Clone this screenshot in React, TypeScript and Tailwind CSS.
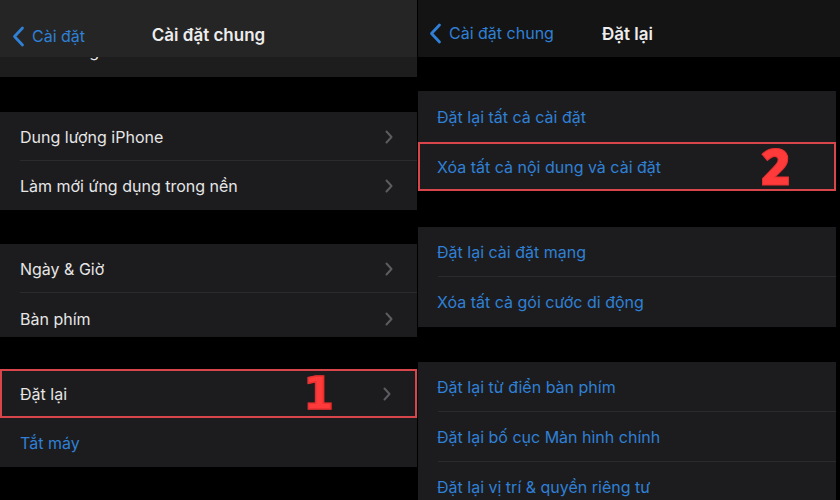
import React from "react";

const Chevron = () => (
  <svg width="8" height="14" viewBox="0 0 8 14" className="shrink-0">
    <path d="M1.5 1.5 L6.5 7 L1.5 12.5" fill="none" stroke="#5c5c60" strokeWidth="2" strokeLinecap="round" strokeLinejoin="round" />
  </svg>
);

const BackChevron = () => (
  <svg width="13" height="21" viewBox="0 0 13 21" className="shrink-0">
    <path d="M10.5 2 L2.5 10.5 L10.5 19" fill="none" stroke="#2f80d6" strokeWidth="2.8" strokeLinecap="round" strokeLinejoin="round" />
  </svg>
);

function Row({ label, blue, chevron, sep, h = "h-[49px]", px = "pl-[20px]", extra = "" }: { label: string; blue?: boolean; chevron?: boolean; sep?: boolean; h?: string; px?: string; extra?: string }) {
  return (
    <div className={`relative shrink-0 ${h} flex items-center ${px} pr-[24px] ${extra}`}>
      <span className={`flex-1 text-[16px] ${blue ? "text-[#2f80d6]" : "text-[#e6e6e6]"}`}>{label}</span>
      {chevron && <Chevron />}
      {sep && <div className="absolute bottom-0 left-[20px] right-0 h-px bg-[#2b2b2d]" />}
    </div>
  );
}

export default function App() {
  return (
    <div className="w-[840px] h-[500px] bg-black flex overflow-hidden" style={{ fontFamily: "Inter, 'Noto Sans', sans-serif" }}>
      {/* Left panel */}
      <div className="w-[417px] h-full flex flex-col bg-black">
        <div className="shrink-0 h-[57px] bg-[#252525] relative flex items-center justify-center pt-[15px]">
          <div className="absolute left-[12px] top-0 h-full flex items-center gap-[7px] pt-[15px]">
            <BackChevron />
            <span className="text-[16px] text-[#2f80d6]">Cài đặt</span>
          </div>
          <span className="text-[17px] font-semibold text-[#ededed]">Cài đặt chung</span>
        </div>
        <div className="shrink-0 h-[20px] bg-[#1d1d1d] overflow-hidden pl-[20px]">
          <div className="text-[16px] leading-[20px] text-[#e6e6e6] mt-[-16px]">Hình trong hình</div>
        </div>
        <div className="shrink-0 h-[35px]" />
        <div className="shrink-0 bg-[#1c1c1e]">
          <Row label="Dung lượng iPhone" chevron sep />
          <Row label="Làm mới ứng dụng trong nền" chevron />
        </div>
        <div className="shrink-0 h-[34px]" />
        <div className="shrink-0 bg-[#1c1c1e]">
          <Row label="Ngày & Giờ" chevron sep h="h-[49px]" />
          <Row label="Bàn phím" chevron h="h-[44px]" extra="pt-[8px]" />
        </div>
        <div className="shrink-0 h-[32px]" />
        <div className="shrink-0 bg-[#1c1c1e]">
          <div className="relative h-[49px] flex items-center pl-[20px] pr-[24px] border-2 border-[#d8454a]">
            <span className="flex-1 text-[16px] text-[#e6e6e6] -ml-[2px]">Đặt lại</span>
            <span
              className="absolute left-[301px] top-[1px] text-[44px] font-bold text-[#ff3a3a] leading-none"
              style={{ fontFamily: "'DejaVu Sans', sans-serif", WebkitTextStroke: "1.5px #e83030" }}
            >
              1
            </span>
            <Chevron />
          </div>
          <Row label="Tắt máy" blue />
        </div>
      </div>
      <div className="w-px bg-black" />
      {/* Right panel */}
      <div className="w-[422px] h-full flex flex-col bg-black">
        <div className="shrink-0 h-[57px] bg-[#141414] relative flex items-center">
          <div className="absolute left-[11px] top-0 h-full flex items-center gap-[7px] pt-[9px]">
            <BackChevron />
            <span className="text-[16px] text-[#2f80d6]">Cài đặt chung</span>
          </div>
          <span className="absolute left-[184px] top-[22px] text-[17px] font-semibold text-[#ededed]">Đặt lại</span>
        </div>
        <div className="shrink-0 h-[34px]" />
        <div className="shrink-0 bg-[#1c1c1e] mr-[4px]">
          <Row label="Đặt lại tất cả cài đặt" blue h="h-[51px]" px="pl-[19px]" />
          <div className="relative h-[49px] flex items-center pl-[17px] pr-[24px] border-2 border-[#d8454a]">
            <span className="flex-1 text-[16px] text-[#2f80d6]">Xóa tất cả nội dung và cài đặt</span>
            <span
              className="absolute left-[341px] top-[-3px] text-[50px] font-extrabold text-[#ff3a3a] leading-none"
              style={{ fontFamily: "'Open Sans', sans-serif", WebkitTextStroke: "1px #e83030" }}
            >
              2
            </span>
          </div>
        </div>
        <div className="shrink-0 h-[36px]" />
        <div className="shrink-0 bg-[#1c1c1e] mr-[4px]">
          <Row label="Đặt lại cài đặt mạng" blue sep h="h-[50px]" px="pl-[19px]" />
          <Row label="Xóa tất cả gói cước di động" blue h="h-[50px]" px="pl-[19px]" />
        </div>
        <div className="shrink-0 h-[35px]" />
        <div className="bg-[#1c1c1e] mr-[4px] flex-1 min-h-0">
          <Row label="Đặt lại từ điển bàn phím" blue sep h="h-[50px]" px="pl-[19px]" />
          <Row label="Đặt lại bố cục Màn hình chính" blue sep h="h-[50px]" px="pl-[19px]" />
          <Row label="Đặt lại vị trí & quyền riêng tư" blue h="h-[50px]" px="pl-[19px]" />
        </div>
      </div>
    </div>
  );
}
